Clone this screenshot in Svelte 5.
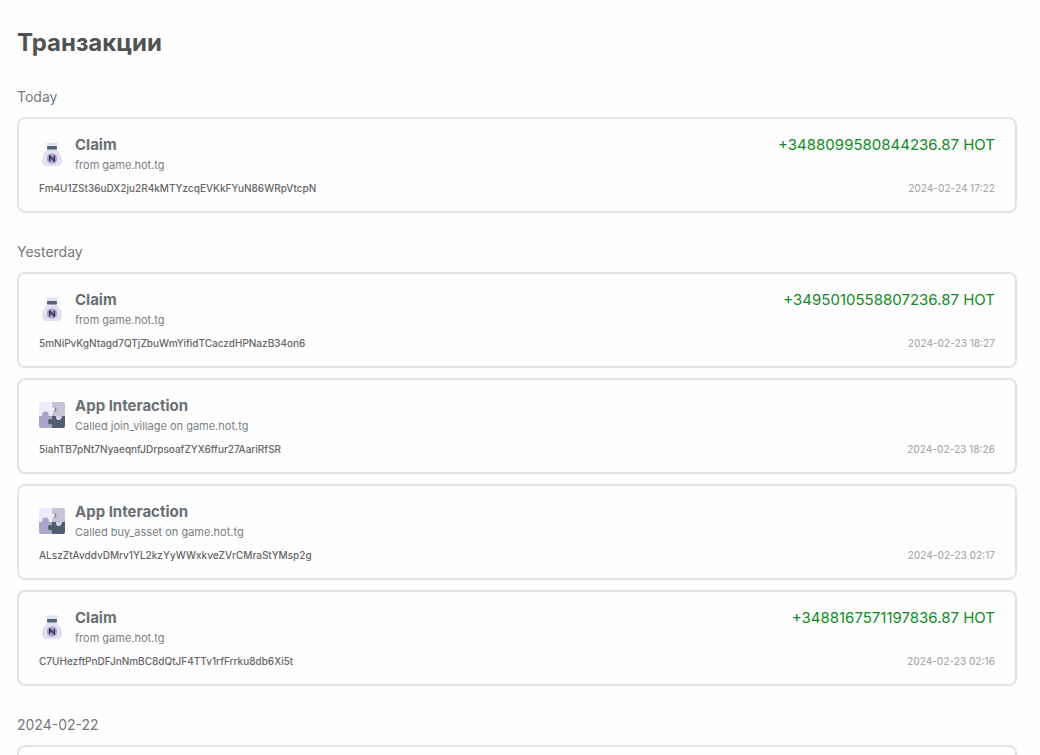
<script lang="ts">
	type Kind = "claim" | "app";

	interface Transaction {
		kind: Kind;
		title: string;
		details: string;
		hash: string;
		time: string;
		amount?: string;
	}

	interface Group {
		label: string;
		items: Transaction[];
	}

	const groups: Group[] = [
		{
			label: "Today",
			items: [
				{
					kind: "claim",
					title: "Claim",
					details: "from game.hot.tg",
					hash: "Fm4U1ZSt36uDX2ju2R4kMTYzcqEVKkFYuN86WRpVtcpN",
					time: "2024-02-24 17:22",
					amount: "+3488099580844236.87 HOT",
				},
			],
		},
		{
			label: "Yesterday",
			items: [
				{
					kind: "claim",
					title: "Claim",
					details: "from game.hot.tg",
					hash: "5mNiPvKgNtagd7QTjZbuWmYifidTCaczdHPNazB34on6",
					time: "2024-02-23 18:27",
					amount: "+3495010558807236.87 HOT",
				},
				{
					kind: "app",
					title: "App Interaction",
					details: "Called join_village on game.hot.tg",
					hash: "5iahTB7pNt7NyaeqnfJDrpsoafZYX6ffur27AariRfSR",
					time: "2024-02-23 18:26",
				},
				{
					kind: "app",
					title: "App Interaction",
					details: "Called buy_asset on game.hot.tg",
					hash: "ALszZtAvddvDMrv1YL2kzYyWWxkveZVrCMraStYMsp2g",
					time: "2024-02-23 02:17",
				},
				{
					kind: "claim",
					title: "Claim",
					details: "from game.hot.tg",
					hash: "C7UHezftPnDFJnNmBC8dQtJF4TTv1rfFrrku8db6Xi5t",
					time: "2024-02-23 02:16",
					amount: "+3488167571197836.87 HOT",
				},
			],
		},
		{
			label: "2024-02-22",
			items: [],
		},
	];
</script>

{#snippet icon(kind: Kind)}
	<svg class="icon" viewBox="0 0 26 26" aria-hidden="true">
		{#if kind === "claim"}
			<path
				d="M7 1.5Q8.5 2.3 10 1.5T13 1.5T16 1.5T19 1.5L17.5 6H8.5Z"
				fill="#e4e2f2"
			/>
			<path
				d="M9 8h8c2.5 2 6 6.5 6 11.5 0 3.5-2 5.5-5 5.5H8c-3 0-5-2-5-5.500C3 14.5 6.500 10 9 8Z"
				fill="#e3e0f3"
			/>
			<rect x="8" y="5" width="10" height="3.5" rx="1" fill="#566375" />
			<circle cx="13" cy="17.5" r="5.3" fill="#aca6ce" />
			<path
				d="M10.7 20.2V14.8L15.3 20.2V14.8"
				fill="none"
				stroke="#3d3d60"
				stroke-width="1.7"
				stroke-linejoin="round"
			/>
		{:else}
			<path d="M2 0H13V14H0V2Q0 0 2 0Z" fill="#efedfb" />
			<path
				d="M13 0H24Q26 0 26 2V14H13V10.5C15 11 16.5 10 16.5 8.5S15 6 13 6.5Z"
				fill="#c7c4da"
			/>
			<path
				d="M0 14H3.5C2.5 11.500 4 9.500 6.500 9.500S10.500 11.500 9.500 14H13V26H2Q0 26 0 24Z"
				fill="#aaa5ca"
			/>
			<path
				d="M13 14H17C16.5 16 18 18 19.7 18S23 16 22.5 14H26V24Q26 26 24 26H13V22C11 23 9 22 9 19.5S11 16.5 13 17.5Z"
				fill="#505e70"
			/>
			<path
				d="M17 14C16.5 16 18 18 19.7 18S23 16 22.5 14Z"
				fill="#d3d0e3"
			/>
			<path
				d="M13 6.5C15 6 16.5 7 16.5 8.5S15 11 13 10.5"
				fill="#efedfb"
			/>
			<path
				d="M16.5 5.5Q17.5 9 14.5 10"
				fill="none"
				stroke="#77758d"
				stroke-width="1.3"
			/>
		{/if}
	</svg>
{/snippet}

<main class="page">
	<h1>Транзакции</h1>

	{#each groups as group (group.label)}
		<section class="group">
			<h2>{group.label}</h2>
			{#each group.items as item (item.hash)}
				<article class="card">
					<div class="card__head">
						{@render icon(item.kind)}
						<div class="card__info">
							<h3>{item.title}</h3>
							<p>{item.details}</p>
						</div>
						{#if item.amount}
							<span class="card__amount">{item.amount}</span>
						{/if}
					</div>
					<div class="card__foot">
						<span class="card__hash">{item.hash}</span>
						<time datetime={item.time}>{item.time}</time>
					</div>
				</article>
			{:else}
				<div class="card card--empty"></div>
			{/each}
		</section>
	{/each}
</main>

<style>
	:global(body) {
		background: #fefefe;
	}

	.page {
		padding: 28px 23px 0 17px;
		color: #6b6f75;
		font-family: Inter, sans-serif;
	}

	h1,
	h2,
	h3,
	p {
		margin: 0;
	}

	h1 {
		margin-bottom: 30px;
		color: #525252;
		font-size: 24px;
		font-weight: 700;
		line-height: 30px;
	}

	.group {
		display: flex;
		flex-direction: column;
		gap: 10px;
		margin-bottom: 30px;
	}

	h2 {
		padding-bottom: 2px;
		color: #75787d;
		font-size: 14px;
		font-weight: 400;
		line-height: 17px;
	}

	.card {
		display: flex;
		flex-direction: column;
		gap: 10px;
		padding: 17px 20px;
		border: 2px solid #e3e3e3;
		border-radius: 8px;
	}

	.card--empty {
		min-height: 58px;
	}

	.card__head {
		display: flex;
		align-items: center;
		gap: 10px;
	}

	.icon {
		flex: none;
		width: 26px;
		height: 26px;
	}

	.card__info {
		display: flex;
		flex: 1;
		flex-direction: column;
		gap: 4px;
	}

	h3 {
		font-size: 15px;
		font-weight: 700;
		line-height: 18px;
	}

	p {
		color: #7b7e83;
		font-size: 11px;
		line-height: 14px;
	}

	.card__amount {
		align-self: flex-start;
		color: #108a24;
		font-size: 15px;
		line-height: 18px;
	}

	.card__foot {
		display: flex;
		justify-content: space-between;
		font-size: 10px;
		font-weight: 500;
		line-height: 12px;
	}

	.card__hash {
		color: #666666;
	}

	time {
		color: #acacac;
	}
</style>
